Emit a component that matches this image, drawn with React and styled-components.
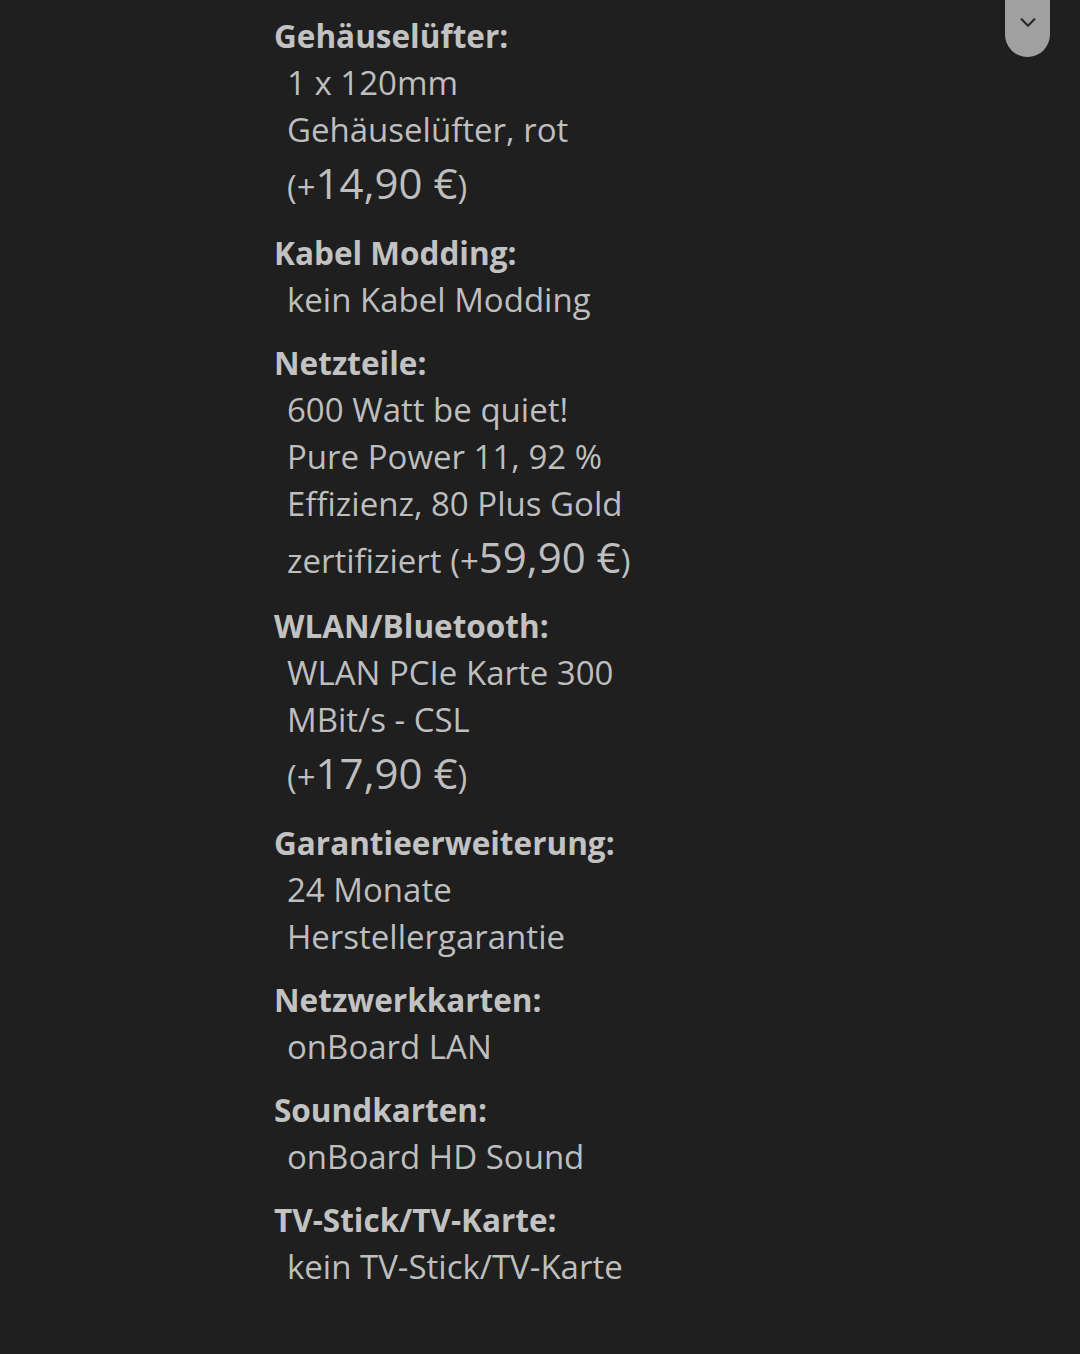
import React from "react";
import styled, { createGlobalStyle } from "styled-components";

const GlobalStyle = createGlobalStyle`
  html, body {
    margin: 0;
    padding: 0;
    background: #1f1f1f;
  }
  body {
    font-family: "Open Sans", "Noto Sans", sans-serif;
    color: #c0c0c0;
  }
`;

const items = [
  { label: "Gehäuselüfter:", value: "1 x 120mm Gehäuselüfter, rot", price: "14,90 €", newLine: true },
  { label: "Kabel Modding:", value: "kein Kabel Modding" },
  { label: "Netzteile:", value: "600 Watt be quiet! Pure Power 11, 92 % Effizienz, 80 Plus Gold zertifiziert", price: "59,90 €" },
  { label: "WLAN/Bluetooth:", value: "WLAN PCIe Karte 300 MBit/s - CSL", price: "17,90 €", newLine: true },
  { label: "Garantieerweiterung:", value: "24 Monate Herstellergarantie" },
  { label: "Netzwerkkarten:", value: "onBoard LAN" },
  { label: "Soundkarten:", value: "onBoard HD Sound" },
  { label: "TV-Stick/TV-Karte:", value: "kein TV-Stick/TV-Karte" },
];

const App = () => {
  return (
    <>
      <GlobalStyle />
      <Page>
        <List>
          {items.map((item, i) => (
            <Block key={i}>
              <Label>{item.label}</Label>
              <Value>
                {item.value}
                {item.price && (
                  <>
                    {item.newLine ? <br /> : " "}
                    (+<Price>{item.price}</Price>)
                  </>
                )}
              </Value>
            </Block>
          ))}
        </List>
        <ScrollButton aria-label="nach unten">
          <svg width="22" height="22" viewBox="0 0 24 24" fill="none" stroke="#2a2a2a" strokeWidth="2.4" strokeLinecap="round" strokeLinejoin="round">
            <polyline points="5 9 12 16 19 9" />
          </svg>
        </ScrollButton>
      </Page>
    </>
  );
};

const Page = styled.div`
  position: relative;
  min-height: 1354px;
  padding: 12px 0 40px 274px;
  box-sizing: border-box;
`;

const List = styled.div`
  width: 366px;
  display: flex;
  flex-direction: column;
  gap: 16px;
`;

const Block = styled.div`
  display: flex;
  flex-direction: column;
`;

const Label = styled.div`
  font-size: 31.5px;
  font-weight: 700;
  line-height: 47px;
  color: #c2c2c2;
`;

const Value = styled.div`
  font-size: 33px;
  line-height: 47px;
  padding-left: 13px;
  color: #bebebe;
`;

const Price = styled.span`
  font-size: 42px;
  line-height: 1.42;
`;

const ScrollButton = styled.button`
  position: absolute;
  top: 0;
  left: 1005px;
  width: 45px;
  height: 57px;
  border: none;
  padding: 0 0 14px;
  background: #a0a0a0;
  border-radius: 0 0 23px 23px;
  display: flex;
  align-items: center;
  justify-content: center;
  cursor: pointer;
`;

export default App;
